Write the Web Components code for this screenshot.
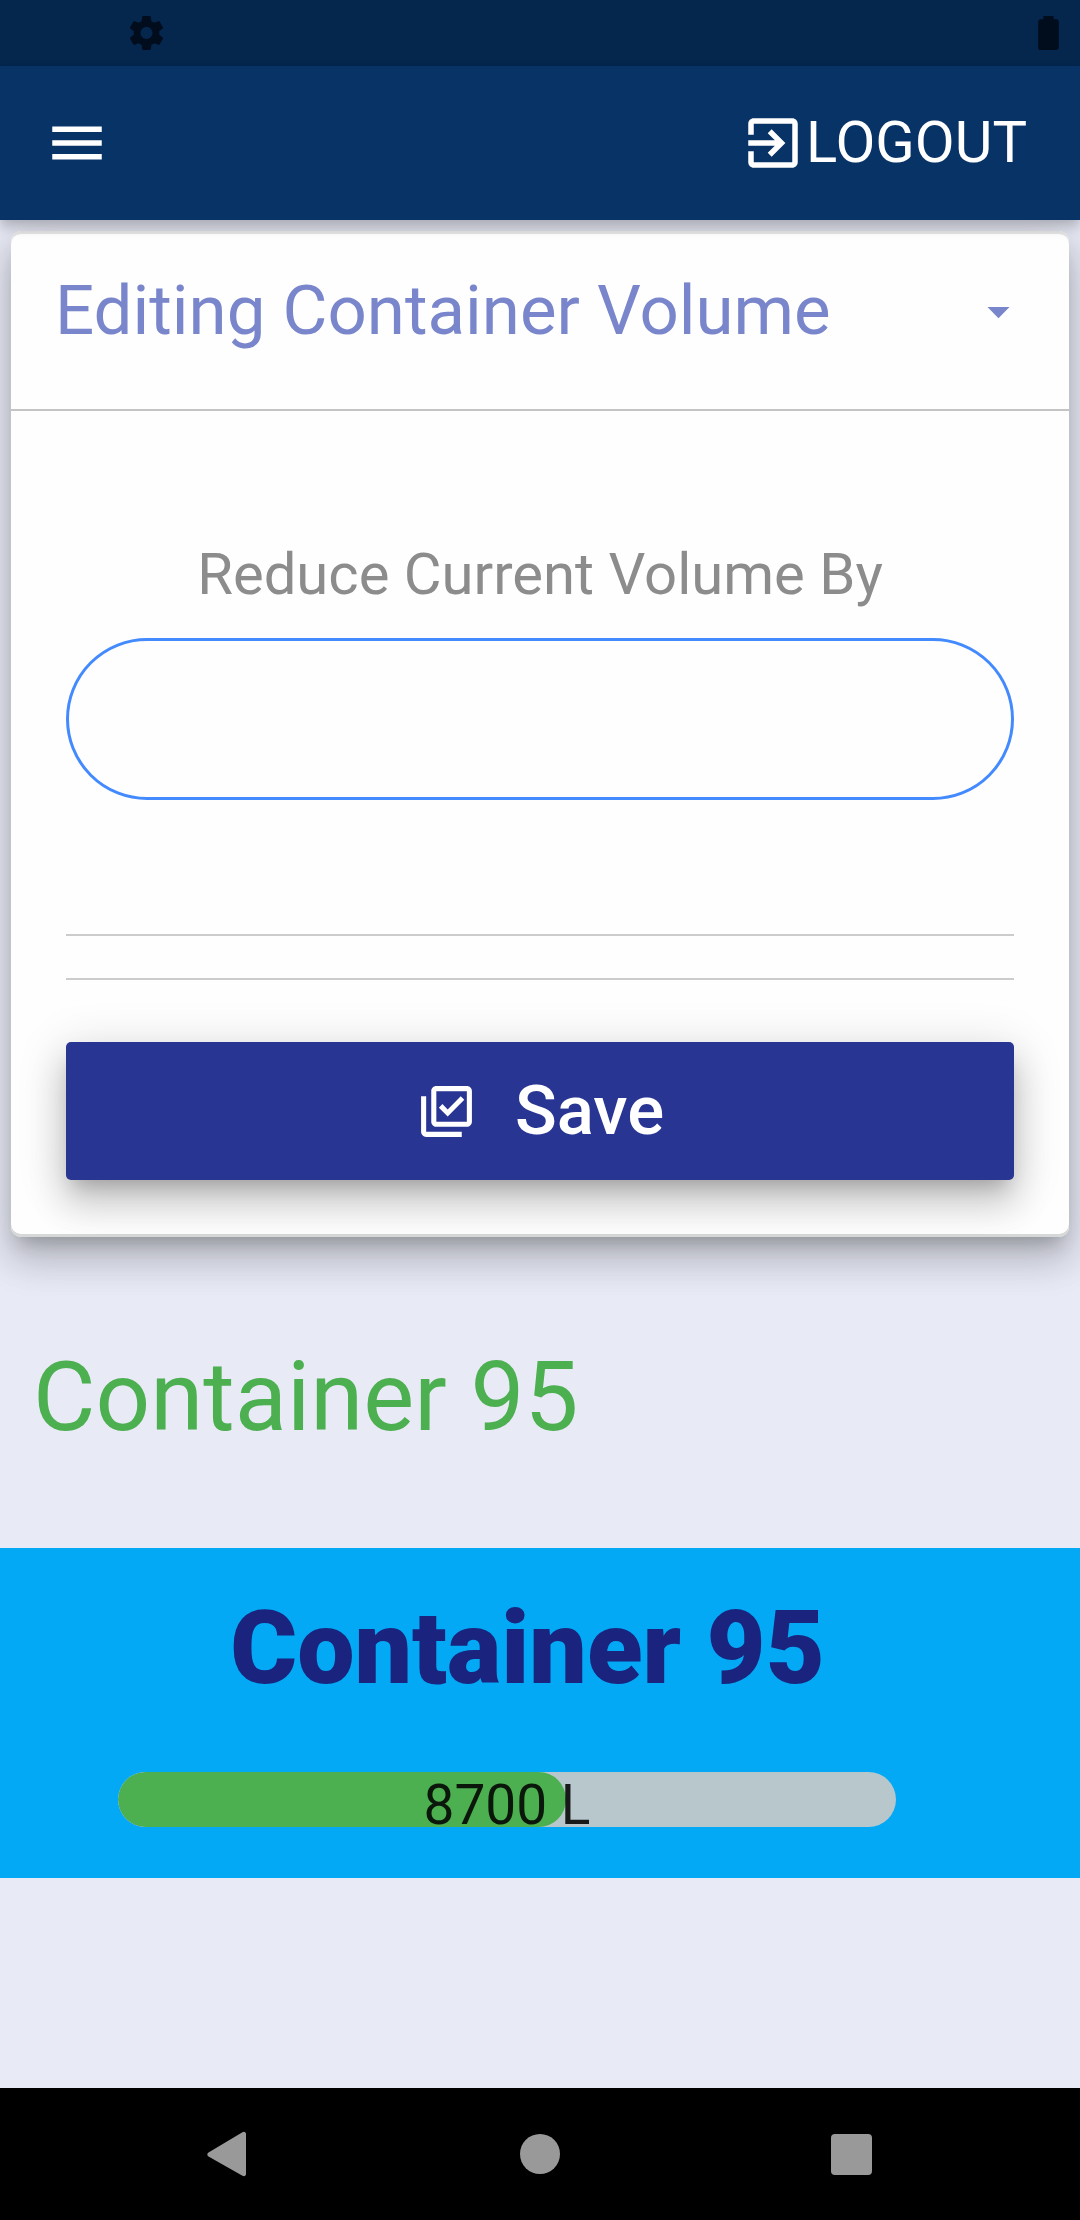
<!DOCTYPE html>
<html lang="en">
<head>
<meta charset="utf-8">
<meta name="viewport" content="width=device-width, initial-scale=1">
<title>Container Volume</title>
<style>
  body {
    margin: 0; background: #e8eaf6; font-family: Roboto, "Noto Sans", sans-serif;
    --raised: 0 13px 18px -8px rgba(0,0,0,.2), 0 24px 36px 3px rgba(0,0,0,.14), 0 8px 48px 5px rgba(0,0,0,.12);
  }
</style>
</head>
<body>
<volume-page></volume-page>

<script>
const define = (name, html, setup) => {
  const template = document.createElement('template');
  template.innerHTML = html;
  customElements.define(name, class extends HTMLElement {
    constructor() {
      super();
      this.attachShadow({ mode: 'open' }).append(template.content.cloneNode(true));
    }
    connectedCallback() { if (setup) setup(this, this.shadowRoot); }
  });
};

define('status-bar', `
  <style>
    :host { display: flex; justify-content: space-between; align-items: center; height: 66px; box-sizing: border-box; padding: 0 11px 0 126px; background: #05264d; color: #010d1d; }
    svg { display: block; width: 41px; height: 42px; fill: currentColor; }
  </style>
  <svg viewBox="0 0 24 24" aria-hidden="true"><path d="M19.43 12.98c.04-.32.07-.64.07-.98s-.03-.66-.07-.98l2.11-1.65c.19-.15.24-.42.12-.64l-2-3.46c-.12-.22-.39-.3-.61-.22l-2.49 1c-.52-.4-1.08-.73-1.69-.98l-.38-2.65C14.46 2.18 14.25 2 14 2h-4c-.25 0-.46.18-.49.42l-.38 2.65c-.61.25-1.17.59-1.69.98l-2.49-1c-.23-.09-.49 0-.61.22l-2 3.46c-.13.22-.07.49.12.64l2.11 1.65c-.04.32-.07.65-.07.98s.03.66.07.98l-2.11 1.65c-.19.15-.24.42-.12.64l2 3.46c.12.22.39.3.61.22l2.49-1c.52.4 1.08.73 1.69.98l.38 2.65c.03.24.24.42.49.42h4c.25 0 .46-.18.49-.42l.38-2.65c.61-.25 1.17-.59 1.69-.98l2.49 1c.23.09.49 0 .61-.22l2-3.46c.12-.22.07-.49-.12-.64l-2.11-1.65zM12 15.5c-1.93 0-3.500-1.570-3.500-3.500s1.570-3.500 3.500-3.500 3.500 1.570 3.500 3.500-1.570 3.500-3.500 3.500z"/></svg>
  <svg viewBox="0 0 24 24" aria-hidden="true"><path d="M16.700 4H15V2H9v2H7.300C6.600 4 6 4.600 6 5.300v15.300C6 21.400 6.600 22 7.300 22h9.300c.7 0 1.400-.6 1.400-1.300V5.300C18 4.600 17.400 4 16.700 4z"/></svg>
`);

define('app-header', `
  <style>
    :host { display: flex; justify-content: space-between; align-items: center; height: 154px; box-sizing: border-box; padding: 0 53px 0 44px; background: #083366; color: #fff; position: relative; box-shadow: 0 5px 11px rgba(0,0,0,.2), 0 10px 13px rgba(0,0,0,.06); }
    button { display: flex; align-items: flex-start; padding: 0; border: 0; background: none; color: inherit; font: 400 58px/64px Roboto, sans-serif; cursor: pointer; }
    svg { display: block; width: 66px; height: 66px; fill: currentColor; }
  </style>
  <button type="button" aria-label="Open menu"><svg viewBox="0 0 24 24"><path d="M3 18h18v-2H3v2zm0-5h18v-2H3v2zm0-7v2h18V6H3z"/></svg></button>
  <button type="button"><svg viewBox="0 0 24 24" aria-hidden="true"><path d="M10.090 15.590L11.500 17l5-5-5-5-1.410 1.410L12.670 11H3v2h9.670l-2.580 2.590zM19 3H5c-1.110 0-2 .9-2 2v4h2V5h14v14H5v-4H3v4c0 1.100.89 2 2 2h14c1.100 0 2-.9 2-2V5c0-1.100-.9-2-2-2z"/></svg><slot></slot></button>
`);

define('mode-select', `
  <style>
    :host { display: grid; align-items: center; padding: 40px 44px 58px; border-bottom: 2px solid #c4c4c4; color: #7986cb; }
    select, svg { grid-area: 1 / 1; }
    select { appearance: none; width: 100%; height: 80px; margin: 0; padding: 0; border: 0; background: none; color: inherit; font: 400 69px/80px Roboto, sans-serif; }
    svg { justify-self: end; width: 53px; height: 53px; fill: currentColor; pointer-events: none; }
  </style>
  <select aria-label="Editing mode"><option>Editing Container Volume</option></select>
  <svg viewBox="0 0 24 24" aria-hidden="true"><path d="M7 10l5 5 5-5z"/></svg>
`);

define('pill-field', `
  <style>
    :host { display: flex; flex-direction: column; gap: 30px; }
    label { color: #8c8c8c; font-size: 58px; line-height: 68px; text-align: center; }
    input { width: 100%; height: 162px; box-sizing: border-box; margin: 0; padding: 0 60px; border: 3px solid #448aff; border-radius: 81px; background: none; outline: 0; font: 400 58px/68px Roboto, sans-serif; }
  </style>
  <label for="amount"><slot></slot></label>
  <input id="amount" type="text" inputmode="numeric">
`);

define('save-button', `
  <style>
    :host { display: block; }
    button { display: flex; justify-content: center; align-items: center; gap: 38px; width: 100%; height: 138px; padding: 0; border: 0; border-radius: 5px; background: #283593; color: #fff; font: 500 69px/80px Roboto, sans-serif; cursor: pointer; box-shadow: var(--raised); }
    svg { display: block; width: 61px; height: 61px; fill: currentColor; }
  </style>
  <button type="button">
    <svg viewBox="0 0 24 24" aria-hidden="true"><path d="M20 2H8c-1.100 0-2 .9-2 2v12c0 1.100.9 2 2 2h12c1.100 0 2-.9 2-2V4c0-1.100-.9-2-2-2zm0 14H8V4h12v12zm-7.530-2L9 10.500l1.400-1.410 2.070 2.080L17.600 6 19 7.410 12.470 14zM4 6H2v14c0 1.100.9 2 2 2h14v-2H4V6z"/></svg>
    <span><slot></slot></span>
  </button>
`);

define('edit-card', `
  <style>
    :host { display: block; margin: 11px 11px 0; overflow: hidden; border-radius: 10px; background: #fefefe;
      box-shadow: var(--raised), inset 0 3px 0 #e4e4e4, inset 0 -3px 0 #d6d8d8; }
    form { display: flex; flex-direction: column; padding: 129px 55px 57px; }
    .rules { height: 42px; margin: 134px 0 62px; border: solid #ccc; border-width: 2px 0; }
  </style>
  <mode-select></mode-select>
  <form>
    <pill-field>Reduce Current Volume By</pill-field>
    <div class="rules"></div>
    <save-button>Save</save-button>
  </form>
`);

define('volume-bar', `
  <style>
    :host { display: grid; grid-template-rows: 55px; border-radius: 28px; background: #b8c7cb; overflow: hidden; color: rgba(0,0,0,.87); }
    .fill, .text { grid-area: 1 / 1; }
    .fill { background: #4caf50; border-radius: 28px; }
    .text { font-size: 55px; line-height: 66px; text-align: center; }
  </style>
  <div class="fill"></div>
  <div class="text"><slot></slot></div>
`, (host, root) => {
  const percent = host.getAttribute('percent');
  root.querySelector('.fill').style.width = percent + '%';
  host.setAttribute('role', 'progressbar');
  host.setAttribute('aria-valuenow', percent);
});

define('container-panel', `
  <style>
    :host { display: flex; flex-direction: column; gap: 64px; padding: 40px 143px 51px 118px; background: #03a9f4; }
    h2 { margin: 0; color: #1a237e; font-size: 102px; line-height: 120px; font-weight: 900; text-align: center; }
    volume-bar { margin-right: 41px; }
  </style>
  <h2><slot name="title"></slot></h2>
  <volume-bar percent="57.6"><slot></slot></volume-bar>
`);

define('system-nav', `
  <style>
    :host { display: flex; justify-content: space-around; align-items: center; height: 132px; padding: 0 73px; background: #000; }
    button { display: block; padding: 0; border: 0; background: none; }
    svg { display: block; width: 48px; height: 48px; fill: #999; }
  </style>
  <button type="button" aria-label="Back"><svg viewBox="0 0 48 48"><path d="M37 2.500Q40 .5 41 3.500V44.500Q40 47.500 37 45.500L3.500 26.500Q1 24.500 3.500 22.500Z"/></svg></button>
  <button type="button" aria-label="Home"><svg viewBox="0 0 48 48"><circle cx="24" cy="24" r="20"/></svg></button>
  <button type="button" aria-label="Recent apps"><svg viewBox="0 0 48 48"><rect x="4" y="4" width="41" height="41" rx="4"/></svg></button>
`);

define('volume-page', `
  <style>
    :host { display: flex; flex-direction: column; min-height: 100vh; }
    main { flex: 1; }
    h1 { margin: 103px 33px 94px; color: #4caf50; font-size: 96px; line-height: 114px; font-weight: 400; }
  </style>
  <status-bar></status-bar>
  <app-header>LOGOUT</app-header>
  <main>
    <edit-card></edit-card>
    <h1>Container 95</h1>
    <container-panel><span slot="title">Container 95</span>8700 L</container-panel>
  </main>
  <system-nav></system-nav>
`);
</script>
</body>
</html>
